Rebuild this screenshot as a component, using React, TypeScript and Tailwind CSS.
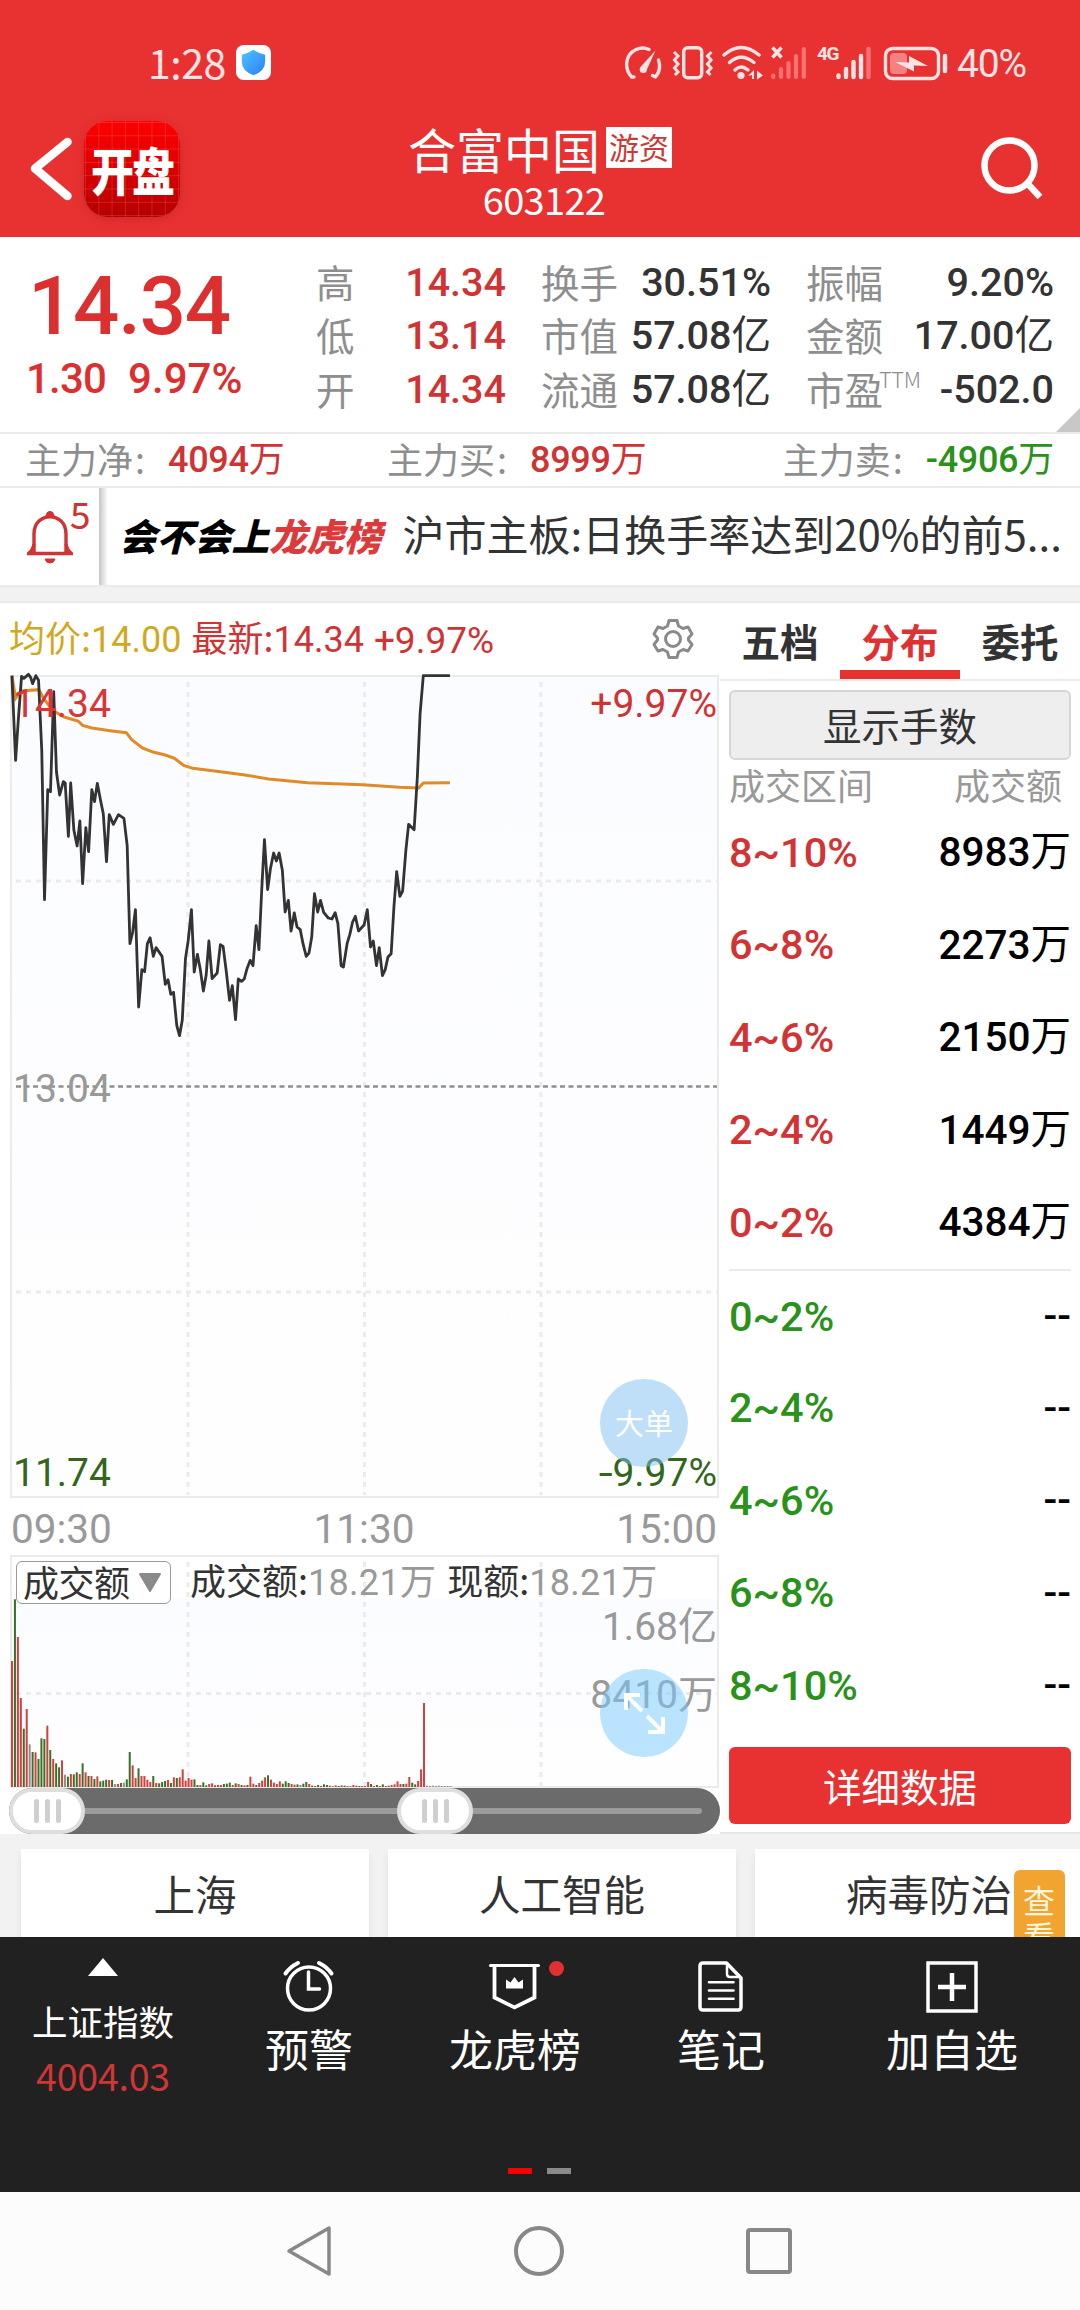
import clsx from "clsx";
import type { ReactNode } from "react";

const num = "font-['Roboto','Noto_Sans_CJK_SC',sans-serif]";

const quoteColumns = [
  {
    className: "ml-[26px] w-[190px]",
    rows: [
      { label: "高", value: "14.34", up: true },
      { label: "低", value: "13.14", up: true },
      { label: "开", value: "14.34", up: true },
    ],
  },
  {
    className: "ml-[35px] w-[230px]",
    rows: [
      { label: "换手", value: "30.51%" },
      { label: "市值", value: "57.08亿" },
      { label: "流通", value: "57.08亿" },
    ],
  },
  {
    className: "ml-[35px] w-[248px]",
    rows: [
      { label: "振幅", value: "9.20%" },
      { label: "金额", value: "17.00亿" },
      { label: "市盈", sup: "TTM", value: "-502.0" },
    ],
  },
];

const distribution = [
  { range: "8~10%", amount: "8983万", up: true },
  { range: "6~8%", amount: "2273万", up: true },
  { range: "4~6%", amount: "2150万", up: true },
  { range: "2~4%", amount: "1449万", up: true },
  { range: "0~2%", amount: "4384万", up: true },
  { range: "0~2%", amount: "--", up: false },
  { range: "2~4%", amount: "--", up: false },
  { range: "4~6%", amount: "--", up: false },
  { range: "6~8%", amount: "--", up: false },
  { range: "8~10%", amount: "--", up: false },
];

const pricePoints =
  "26,226 34,480 40,357 47,228 52,234 62,222 67,232 71,250 78,226 84,240 91,450 97,898 104,568 110,574 117,274 123,515 130,584 138,544 142,548 149,708 154,548 161,690 168,737 174,662 180,850 187,682 193,754 200,568 206,604 212,549 219,600 225,640 232,784 238,643 247,672 258,643 270,654 277,735 283,1030 289,995 295,928 302,1220 309,1108 315,1114 321,1030 327,1012 334,1068 340,1042 353,1068 360,1152 366,1138 372,1182 378,1176 385,1275 391,1306 397,1260 404,1075 410,1020 417,928 423,1115 430,1062 436,1105 443,1172 449,1125 455,1022 462,1135 473,1118 480,1033 486,1038 493,1115 500,1200 506,1156 513,1258 519,1136 526,1143 532,1136 538,1105 545,1080 551,1096 558,976 564,1048 570,870 576,718 583,868 589,805 596,758 602,782 608,758 615,810 621,935 628,900 634,992 641,938 647,980 654,988 660,1030 667,1068 673,1058 679,1010 685,880 692,935 698,900 705,936 715,953 723,956 730,937 736,970 743,1096 748,1100 756,1030 762,1002 768,965 774,948 781,992 793,974 800,928 807,1040 813,1022 820,1096 826,1042 833,1126 839,1108 845,1070 852,1060 858,920 864,814 871,888 877,872 884,750 890,672 902,688 909,530 915,340 922,226 980,226";

const averagePoints =
  "26,226 34,294 45,272 85,268 95,295 117,332 140,350 170,362 180,375 200,383 240,391 275,397 287,418 310,443 335,456 360,464 380,474 400,495 420,504 480,514 530,523 585,536 670,547 790,553 870,561 912,563 922,548 980,547";

// one entry per minute: height + r(ed) / g(reen) / n(eutral)
const volume =
  "378r 563g 450r 267r 175g 234r 128n 105g 104r 84g 146g 144g 184r 111g 84r 71g 59g 80r 37n 31g 39r 38g 44g 39r 71g 44r 33g 33r 24g 32r 17g 19g 22g 21r 21g 9n 9r 12g 13n 23g 105g 65r 27r 56g 33r 33r 22r 15r 33g 12r 11g 15g 18g 21r 12g 29r 27g 29r 53r 19r 27r 22r 23g 6g 6r 14g 5g 9r 11r 5g 6r 6r 9g 10g 13g 6r 11g 9r 6g 5r 6g 31r 10r 6g 12r 19r 29r 35g 22r 13r 9r 17r 10g 17g 12g 9r 7r 8g 6n 10g 15g 9r 4g 3r 6g 3r 8g 6g 4r 3n 5r 3g 5r 4g 3r 3n 6r 4r 3g 3r 3r 15r 9g 3r 6g 3r 8g 3r 4g 6r 8r 17r 9r 9g 10r 30r 13g 8g 18r 53r 252r 4n 3n 4n 3n 4n 3n 3n 3n 3n".split(
    " "
  );

const barColor: Record<string, string> = {
  r: "#d63f3f",
  g: "#3c7028",
  n: "#8f8f8f",
};

// medium weight digits, regular weight 万 / 亿 unit
const Figure = ({ value, className }: { value: string; className?: string }) => {
  const unit = value.match(/[万亿]$/)?.[0] ?? "";
  return (
    <span className={clsx(num, "font-medium", className)}>
      {value.replace(unit, "")}
      {unit && <span className="font-normal">{unit}</span>}
    </span>
  );
};

const StatusIcons = () => (
  <svg width="324" height="36" viewBox="624 44 324 36" fill="none" stroke="#ffe3e3" strokeWidth="3.4">
    {/* data saver gauge */}
    <path d="M634 76 H631.500 C624 67 625 54 636 48.500 Q643 45.500 649 48.500" strokeLinecap="round" strokeLinejoin="round" />
    <path d="M658.500 59 Q662 68 655.500 76 L652.500 74.500" strokeLinecap="round" strokeLinejoin="round" />
    <path d="M640.500 66 L655.500 49.500 L646.500 69.500Z" fill="#ffe3e3" stroke="none" />
    <circle cx="643.300" cy="68.500" r="3.600" fill="#ffe3e3" stroke="none" />
    {/* vibrate */}
    <rect x="683.700" y="46.700" width="18" height="30" rx="4" />
    <path d="M674 51 l4 4 -3.500 4 3.500 4 -3.500 4 3.500 4 -3 3" strokeWidth="3" />
    <path d="M711.500 51 l-4 4 3.500 4 -3.500 4 3.500 4 -3.500 4 3 3" strokeWidth="3" />
    {/* wifi */}
    <path d="M724 54 Q741 39 759 54" strokeLinecap="round" />
    <path d="M729.500 61.500 Q741 51 754 61.500" strokeLinecap="round" />
    <path d="M735 69 Q741 63 748 69" strokeLinecap="round" />
    <circle cx="741" cy="74.500" r="3.600" fill="#ffe3e3" stroke="none" />
    <path d="M748 75 l6 -6 v9 h-2 v-4 z M757 69.500 l6 5 -6 4 z" fill="#ffe3e3" stroke="none" />
    {/* sim 1, no service */}
    <path d="M772.500 46.500 l9 10 M781.500 46.500 l-9 10" />
    <g stroke="#ff7272" strokeWidth="4.200" strokeLinecap="round">
      <path d="M773.300 74.500 v1.500 M781 68 v8 M788.500 62 v14 M796 55 v21 M803.800 48 v28" />
    </g>
    {/* sim 2 */}
    <g strokeWidth="4.400" strokeLinecap="round">
      <path d="M838.500 74.500 v1.500 M846 68 v8 M853.500 61 v15 M861 55 v21" />
      <path d="M868.500 48 v28" stroke="#ff7272" />
    </g>
    {/* battery */}
    <rect x="885.500" y="47.500" width="53" height="30" rx="7" />
    <rect x="890" y="52" width="17" height="21" rx="4" fill="#f58080" stroke="none" />
    <path d="M895 61 L909 61.500 V55 L928 65 L914 64.500 V70.500 Z" fill="#ffe3e3" stroke="none" />
    <path d="M945 55 v15" strokeWidth="4.500" strokeLinecap="round" />
  </svg>
);

const Header = () => (
  <header className="h-[237px] bg-[#e83131] text-white">
    <div className="flex h-[98px] items-center pt-[29px] pr-[53px] pl-[148px] text-[#ffe3e3]">
      <span className="-mt-1 text-[41px] leading-none tracking-[-0.5px]">1:28</span>
      <svg className="-mt-0.5 ml-[10px]" width="35" height="35" viewBox="0 0 36 36">
        <defs>
          <linearGradient id="shield" x1="0" y1="0" x2="1" y2="1">
            <stop offset="0" stopColor="#4cc4ff" />
            <stop offset="1" stopColor="#2f7df6" />
          </linearGradient>
        </defs>
        <rect width="36" height="36" rx="8" fill="#fff" />
        <path d="M18 5 Q24 9 30 10 V17 Q30 27 18 31 Q6 27 6 17 V10 Q12 9 18 5Z" fill="url(#shield)" />
      </svg>
      <div className="relative -mt-0.5 ml-auto">
        <StatusIcons />
        <span className="absolute top-[1px] left-[193px] font-['Roboto',sans-serif] text-[19px] leading-[16px] font-bold tracking-[-1.5px]">
          4G
        </span>
      </div>
      <span className="mt-0.5 ml-[9px] w-[70px] font-['Roboto',sans-serif] text-[39px] leading-none tracking-[-1.2px]">
        40%
      </span>
    </div>
    <div className="flex h-[139px] items-center pr-[36px] pl-[29px]">
      <svg className="mt-px" width="44" height="66" viewBox="0 0 44 66" fill="none" stroke="#fff" strokeWidth="8.500" strokeLinecap="round" strokeLinejoin="round">
        <path d="M38.500 7 L6 33.500 L38.500 61" />
      </svg>
      <div className="mt-[3px] ml-[11px] flex h-[96px] w-[96px] items-center justify-center rounded-[24px] bg-[linear-gradient(#ffffff22_1px,transparent_1px),linear-gradient(90deg,#ffffff22_1px,transparent_1px),linear-gradient(#ff0000,#b50000)] bg-[length:13.300px_13.300px,13.300px_13.300px,100%_100%] bg-[position:1px_1px,1px_1px,0_0] shadow-[0_2px_8px_#a0202066]">
        <span className="-mt-0.5 scale-y-120 text-[43px] leading-none font-black tracking-[-2px]">开盘</span>
      </div>
      <div className="mt-[10px] ml-[228px] w-[264px]">
        <div className="flex items-center">
          <h1 className="text-[48px] leading-[52px] font-normal">合富中国</h1>
          <span className="ml-[6px] flex h-[41px] w-[66px] items-center justify-center bg-white pb-1 text-[30px] leading-none text-[#c93a36]">
            游资
          </span>
        </div>
        <div className="pl-2 text-center text-[38px] leading-[50px] tracking-[-0.7px]">603122</div>
      </div>
      <svg className="ml-auto" width="64" height="64" viewBox="0 0 64 64" fill="none" stroke="#fff" strokeWidth="6.500">
        <circle cx="29.500" cy="29.500" r="25" />
        <path d="M47.500 47.500 L60 61" />
      </svg>
    </div>
  </header>
);

const Quote = () => (
  <section className="relative flex h-[197px] border-b-2 border-[#ebebeb]">
    <div className={clsx("w-[290px] pt-[22px] font-medium text-[#dc2f30]", num)}>
      <div className="pl-[28px] text-[81.500px] leading-[94px] tracking-[-1.200px]">14.34</div>
      <div className="flex gap-[22px] pt-[1px] pl-[26px] text-[42px] leading-[50px] whitespace-nowrap">
        <span className="tracking-[-0.800px]">1.30</span>
        <span>9.97%</span>
      </div>
    </div>
    {quoteColumns.map((column, i) => (
      <div key={i} className={clsx("pt-[19px]", column.className)}>
        {column.rows.map((row) => (
          <div key={row.label} className="flex h-[53.500px] items-center justify-between">
            <span className="flex pb-1 text-[38.500px] leading-[48px] text-[#8e8e8e]">
              {row.label}
              {row.sup && (
                <sup className="top-0 -ml-1 pt-[3px] text-[22px] leading-none font-light tracking-[-0.500px]">{row.sup}</sup>
              )}
            </span>
            <Figure
              value={row.value}
              className={clsx("text-[39.500px] leading-[48px]", row.up ? "text-[#cf3333]" : "text-[#333]")}
            />
          </div>
        ))}
      </div>
    ))}
    <div className="absolute right-0 bottom-0 h-6 w-6 bg-[#c8c8c8] [clip-path:polygon(100%_0,100%_100%,0_100%)]" />
  </section>
);

const MainFunds = () => (
  <section className="flex h-[54px] items-center border-b-2 border-[#ebebeb] pr-[26px] pl-[25px] text-[36px] leading-none">
    {[
      { label: "主力净", value: "4094万", color: "text-[#cf3333]", className: "w-[362px]" },
      { label: "主力买", value: "8999万", color: "text-[#cf3333]", className: "" },
      { label: "主力卖", value: "-4906万", color: "text-[#2a921b]", className: "ml-auto" },
    ].map((item) => (
      <div key={item.label} className={clsx("flex items-center gap-[23px]", item.className)}>
        <span className="pb-1 text-[#8e8e8e]">
          {item.label}
          <span className="pl-[2px]">:</span>
        </span>
        <Figure value={item.value} className={clsx("tracking-[-0.300px]", item.color)} />
      </div>
    ))}
  </section>
);

const Notice = () => (
  <section className="flex h-[97px]">
    <div className="relative flex w-[99px] items-center pl-[27px] text-[#cf3333]">
      <svg width="46" height="54" viewBox="0 0 46 54" fill="none" stroke="currentColor" strokeWidth="3.400">
        <path d="M7 42 V24 C7 1 39 1 39 24 V42" />
        <path d="M7 34 Q6 40 1.500 43.500 H44.500 Q40 40 39 34" />
        <path d="M19 7 Q19 1.500 23 1.500 Q27 1.500 27 7Z M18 49 H28 Q27 53 23 53 Q19 53 18 49Z" fill="currentColor" strokeWidth="1" />
      </svg>
      <span className="absolute top-[3px] left-[70px] text-[37px] leading-[44px]">5</span>
    </div>
    <div className="w-[9px] bg-linear-to-r from-[#c6c6c6] to-white" />
    <div className="flex flex-1 items-center pb-2 pl-[11px]">
      <span className="mt-[5px] text-[37.500px] leading-none font-black text-black italic">
        会不会上<span className="text-[#dd3a3c]">龙虎榜</span>
      </span>
      <span className="ml-[21px] text-[42px] leading-none whitespace-nowrap text-[#333]">
        沪市主板:日换手率达到20%的前5...
      </span>
    </div>
  </section>
);

const RoundButton = ({ className, children }: { className: string; children: ReactNode }) => (
  <button
    className={clsx(
      "absolute left-[588px] flex h-[88px] w-[88px] items-center justify-center rounded-full text-white",
      className
    )}
  >
    {children}
  </button>
);

const PriceChart = () => (
  <div className="relative ml-[10px] h-[823px] w-[709px] border-2 border-[#ebebeb] bg-linear-to-b from-[#fbfcff] to-[#fefefe]">
    <svg className="absolute -top-0.5 -left-px overflow-visible" width="708" height="823" fill="none">
      <g stroke="#ebebeb" strokeWidth="3">
        <path d="M177 7 V820 M353.500 7 V820 M530 7 V820" strokeDasharray="5 5" />
        <path d="M5 206 H706 M5 617 H706" strokeDasharray="5 5" />
      </g>
      <path d="M5 411.500 H706" stroke="#8e8e8e" strokeWidth="2.500" strokeDasharray="5 3.500" />
      <svg width="708" height="823" viewBox="24 224 1542 2469" preserveAspectRatio="none" className="overflow-visible">
        <polyline points={averagePoints} stroke="#e28a26" strokeWidth="3" vectorEffect="non-scaling-stroke" />
        <polyline points={pricePoints} stroke="#333" strokeWidth="2.800" strokeLinejoin="round" vectorEffect="non-scaling-stroke" />
      </svg>
    </svg>
    <div className={clsx("absolute inset-0 text-[39px] leading-[44px]", num)}>
      <span className="absolute top-[5px] left-px text-[#d83536]">14.34</span>
      <span className="absolute top-[5px] right-0 text-[#cf3333]">+9.97%</span>
      <span className="absolute top-[390px] left-px text-[#999]">13.04</span>
      <span className="absolute bottom-[1px] left-px text-[#33661c]">11.74</span>
      <span className="absolute right-0 bottom-[1px] text-[#33661c]">
        <span className="inline-block origin-right scale-x-130">-</span>9.97%
      </span>
    </div>
    <RoundButton className="top-[702px] bg-[#7dc0f07d]">
      <span className="pb-px text-[29px] leading-none">大单</span>
    </RoundButton>
  </div>
);

const VolumeChart = () => (
  <div className="relative ml-[10px] h-[233px] w-[709px] border-2 border-[#ebebeb] bg-linear-to-b from-white from-[42px] via-[#fbfcff] via-[42px] to-[#fefefe]">
    <svg className="absolute -top-0.5 -left-px" width="708" height="233">
      <g stroke="#ebebeb" strokeWidth="3" fill="none">
        <path d="M177 7 V231 M353.500 7 V231 M530 7 V231 M5 138.500 H706" strokeDasharray="5 5" />
      </g>
      {volume.map((bar, i) => {
        const height = parseInt(bar) / 3;
        return <rect key={i} x={i * 2.943} y={232 - height} width="2" height={height} fill={barColor[bar.slice(-1)]} />;
      })}
    </svg>
    <div className="relative flex pt-[4px] pl-[4px] text-[36px] leading-[36px] text-[#333]">
      <button className="flex h-[43px] w-[155px] items-center rounded-[6px] border border-[#999] bg-white pb-1 pl-[6px] tracking-[-0.500px]">
        成交额
        <svg className="mt-1 ml-[8px]" width="24" height="20" viewBox="0 0 24 20">
          <path d="M2 1 H22 L12 18Z" fill="#8a8a8a" stroke="#8a8a8a" strokeWidth="2" strokeLinejoin="round" />
        </svg>
      </button>
      <span className="ml-[19px] whitespace-nowrap">
        成交额:<span className={clsx("tracking-[0.300px] text-[#999]", num)}>18.21万</span>
      </span>
      <span className="ml-[11px] whitespace-nowrap">
        现额:<span className={clsx("tracking-[0.300px] text-[#999]", num)}>18.21万</span>
      </span>
    </div>
    <span className={clsx("absolute top-[46px] right-0 text-[39px] leading-[48px] text-[#999]", num)}>1.68亿</span>
    <span className={clsx("absolute top-[114px] right-0 text-[39px] leading-[48px] text-[#999]", num)}>8410万</span>
    <RoundButton className="top-[112px] bg-[#75caff80]">
      <svg width="44" height="44" viewBox="0 0 44 44" fill="none" stroke="#fff" strokeWidth="4">
        <path d="M4 19 V4 H18 M4 4 L20 20 M25 25 L41 41 M41 26 V41 H26" />
      </svg>
    </RoundButton>
  </div>
);

const SliderThumb = () => (
  <div className="flex h-[46px] w-[76px] items-center justify-center gap-[6px] rounded-[23px] border-4 border-[#dedede] bg-white">
    <i className="h-6 w-[5px] rounded-full bg-[#cfcfcf]" />
    <i className="h-6 w-[5px] rounded-full bg-[#cfcfcf]" />
    <i className="h-6 w-[5px] rounded-full bg-[#cfcfcf]" />
  </div>
);

const Chart = () => (
  <div className="w-[720px]">
    <div className="flex h-[72px] items-center pl-[9px] text-[36px] leading-none">
      <span className="mb-[3px] text-[#d1a91f]">
        均价:<span className={num}>14.00</span>
      </span>
      <span className="mb-[3px] ml-[10px] text-[#cf3333]">
        最新:<span className={num}>14.34</span>
      </span>
      <span className={clsx("mt-[2px] ml-[10px] text-[37px] text-[#cf3333]", num)}>+9.97%</span>
      <svg className="mr-[26px] ml-auto" width="42" height="42" viewBox="0 0 42 42" fill="none" stroke="#8a8a8a" strokeWidth="3" strokeLinejoin="round">
        <path d="M17 2.500 H25 L26.500 8 L31 10.500 L36 9 L40 16 L36.500 20 V22 L40 26.500 L36 33 L31 31.500 L26.500 34 L25 39.500 H17 L15.500 34 L11 31.500 L6 33 L2 26.500 L5.500 22 V20 L2 16 L6 9 L11 10.500 L15.500 8Z" />
        <circle cx="21" cy="21" r="7.500" />
      </svg>
    </div>
    <PriceChart />
    <div className={clsx("flex h-[57px] justify-between pt-[9px] pr-[3px] pl-[11px] text-[40.500px] leading-[44px]", "text-[#999]", num)}>
      <span>09:30</span>
      <span>11:30</span>
      <span>15:00</span>
    </div>
    <VolumeChart />
    <div className="relative ml-[9px] flex h-[46px] w-[711px] rounded-[23px] bg-[#6b6b6b]">
      <div className="absolute top-5 left-8 h-[6px] w-[661px] rounded-full bg-[#9b9b9b]" />
      <div className="relative">
        <SliderThumb />
      </div>
      <div className="relative ml-[312px]">
        <SliderThumb />
      </div>
    </div>
  </div>
);

const SidePanel = () => (
  <div className="flex w-[360px] flex-col border-b-2 border-[#e6e6e6]">
    <div className="grid h-[78px] grid-cols-3 border-b-2 border-[#ebebeb] text-center text-[38.500px] leading-[75px] font-bold text-[#333]">
      <span>五档</span>
      <span className="h-[76px] border-b-9 border-[#e83131] text-[#e03132]">分布</span>
      <span>委托</span>
    </div>
    <div className="px-[9px]">
      <button className="mt-[9px] flex h-[70px] w-full items-center justify-center rounded-[6px] border-2 border-[#d6d6d6] bg-[#eee] pb-0.5 text-[38.500px] leading-none text-[#333]">
        显示手数
      </button>
      <div className="flex h-[46px] items-center justify-between pt-[2px] pr-[9px] text-[36px] leading-[36px] text-[#999]">
        <span>成交区间</span>
        <span>成交额</span>
      </div>
      {distribution.map((row, i) => (
        <div
          key={i}
          className={clsx(
            "flex h-[92.600px] items-center justify-between leading-none",
            i === 5 && "border-t-2 border-[#ebebeb]"
          )}
        >
          <Figure value={row.range} className={clsx("text-[41.500px]", row.up ? "text-[#d23334]" : "text-[#2a921b]")} />
          <Figure value={row.amount} className="text-[40.500px] text-black" />
        </div>
      ))}
      <button className="mt-[15px] flex h-[77px] w-full items-center justify-center rounded-[6px] bg-[#e83131] pb-px text-[38.500px] leading-none text-white">
        详细数据
      </button>
    </div>
  </div>
);

const Sectors = () => (
  <section className="relative flex h-[103px] gap-[19px] overflow-hidden bg-[#f2f2f2] pt-[15px] pl-[21px]">
    {["上海", "人工智能", "病毒防治"].map((name) => (
      <div
        key={name}
        className="h-[120px] w-[348px] shrink-0 bg-white pt-[20px] text-center text-[41.500px] leading-[48px] text-[#333] shadow-[0_6px_8px_#00000014]"
      >
        {name}
      </div>
    ))}
    <div className="absolute top-[36px] right-[15px] h-[100px] w-[51px] rounded-[6px] bg-[#f2a431] px-[9px] pt-[11px] text-[32px] leading-[36px] text-[#fff6dd]">
      查看
    </div>
  </section>
);

const TabItem = ({ label, className, children }: { label: string; className: string; children: ReactNode }) => (
  <div className={clsx("flex flex-col items-center", className)}>
    <svg width="52" height="52" viewBox="0 0 52 52" fill="none" stroke="#fff" strokeWidth="3.500" className="overflow-visible">
      {children}
    </svg>
    <span className="pt-[8px] text-[44px] leading-[54px]">{label}</span>
  </div>
);

const TabBar = () => (
  <footer className="h-[255px] bg-[#212121] text-white">
    <div className="flex h-[231px] pt-[24px]">
      <div className="flex w-[206px] flex-col items-center">
        <svg className="-mt-[3px]" width="30" height="18">
          <path d="M15 0 L30 18 H0Z" fill="#fff" />
        </svg>
        <span className="pt-[20px] text-[35.500px] leading-[50px]">上证指数</span>
        <span className="pt-[6px] text-[37.500px] leading-[46px] tracking-[-0.200px] text-[#cf3636]">4004.03</span>
      </div>
      <TabItem label="预警" className="w-[206px]">
        <circle cx="26" cy="27.500" r="21.500" />
        <path d="M25.500 11 V28 H36.500" strokeLinecap="round" />
        <path d="M2.500 12.500 Q7 6 15 2 M48.500 12.500 Q44 6 36 2" strokeWidth="4" strokeLinecap="round" />
      </TabItem>
      <TabItem label="龙虎榜" className="w-[206px]">
        <path d="M1.500 4.500 H49.500" strokeWidth="3" strokeLinecap="round" />
        <path d="M5.500 5 V36.500 L25.500 46.500 L45.500 36.500 V5" strokeWidth="3.800" />
        <path d="M17 27.500 V18.500 L21.500 21.500 L25.500 16 L29.500 21.500 L34 18.500 V27.500Z" fill="#fff" stroke="none" />
        <circle cx="67.500" cy="7.500" r="7.500" fill="#e03132" stroke="none" />
      </TabItem>
      <TabItem label="笔记" className="w-[206px]">
        <path d="M8 2 H31.500 L46 17 V46 Q46 49 43 49 H8 Q5 49 5 46 V5 Q5 2 8 2Z" strokeLinejoin="round" />
        <path d="M32 3 V13 Q32 16 35 16 H45" strokeWidth="2.500" />
        <path d="M14 21.200 H38.500 M14 29.500 H38.500 M14 37.800 H38.500" strokeWidth="2.600" strokeLinecap="round" />
      </TabItem>
      <TabItem label="加自选" className="w-[256px]">
        <rect x="2" y="2" width="48" height="48" />
        <path d="M12 26 H40 M26 12 V40" strokeWidth="4.500" />
      </TabItem>
    </div>
    <div className="flex justify-center gap-[15px] pr-px">
      <i className="h-[6px] w-6 bg-[#f60000]" />
      <i className="h-[6px] w-6 bg-[#8a8a8a]" />
    </div>
  </footer>
);

const SystemNav = () => (
  <nav className="flex h-[118px] items-center justify-between bg-[#fcfcfc] pr-[288px] pl-[286px]">
    <svg width="46" height="52" viewBox="0 0 46 52" fill="none" stroke="#888" strokeWidth="3.500" strokeLinejoin="round">
      <path d="M43 3 V49 L3 26Z" />
    </svg>
    <svg width="52" height="52" viewBox="0 0 52 52" fill="none" stroke="#888" strokeWidth="4">
      <circle cx="26" cy="26" r="23" />
    </svg>
    <svg width="46" height="46" viewBox="0 0 46 46" fill="none" stroke="#888" strokeWidth="4">
      <rect x="2" y="2" width="42" height="42" rx="2" />
    </svg>
  </nav>
);

export default function App() {
  return (
    <div className="h-[2310px] w-[1080px] overflow-hidden bg-white font-['Noto_Sans_CJK_SC',sans-serif]">
      <Header />
      <Quote />
      <MainFunds />
      <Notice />
      <div className="h-[18px] border-y-2 border-[#ebebeb] bg-[#f2f2f2]" />
      <main className="flex h-[1231px]">
        <Chart />
        <SidePanel />
      </main>
      <Sectors />
      <TabBar />
      <SystemNav />
    </div>
  );
}
